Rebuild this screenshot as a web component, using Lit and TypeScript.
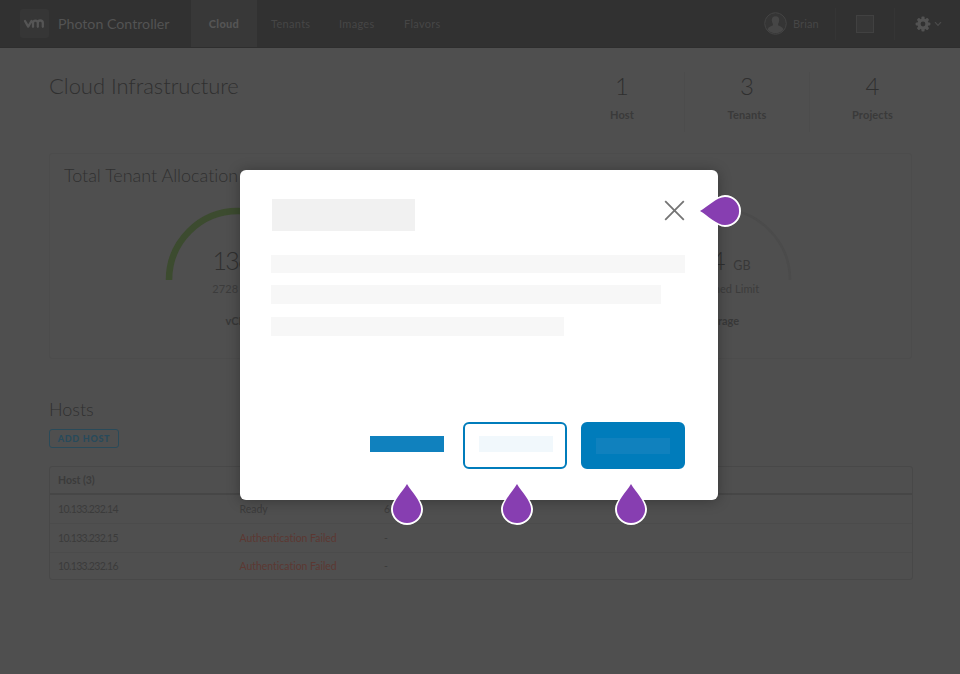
import { LitElement, html, css, svg } from "lit";
import { customElement, property } from "lit/decorators.js";

@customElement("callout-drop")
class CalloutDrop extends LitElement {
  @property({ reflect: true }) point = "up";
  static styles = css`
    :host { display: block; position: absolute; width: 34px; height: 44px; }
    :host([point="left"]) svg { transform: rotate(-90deg); }
    svg { display: block; overflow: visible; }
    .rim { fill: #fff; }
    .core { fill: #873eb1; }
  `;
  render() {
    return html`<svg width="34" height="44" viewBox="0 0 34 44">
      <path class="rim" d="M17 1.6 C13.4 8 1 18.5 1 27 A16 16 0 0 0 33 27 C33 18.5 20.6 8 17 1.6Z"/>
      <path class="core" d="M17 2 C12.6 9.5 2.9 19 2.9 27 A14.1 14.1 0 0 0 31.1 27 C31.1 19 21.4 9.5 17 2Z"/>
    </svg>`;
  }
}

@customElement("app-root")
class AppRoot extends LitElement {
  static styles = css`
    :host {
      display: block; position: relative; width: 960px; height: 674px; overflow: hidden;
      background: #4f4f4f; color: #2f2f2f; font-family: Lato, "Open Sans", sans-serif;
      font-variant-ligatures: none;
    }
    * { box-sizing: border-box; }
    .header { height: 48px; background: #313131; border-bottom: 1px solid #2e2e2e; display: flex; align-items: center; color: #464646; font-size: 11px; }
    .logo { width: 29px; height: 29px; margin-left: 20px; border-radius: 3px; background: #363636; display: block; }
    .logo path { fill: none; stroke: #555; stroke-width: 2.3; stroke-linecap: round; stroke-linejoin: round; }
    .brand { margin-left: 9px; width: 133px; color: #535353; font-size: 14.2px; white-space: nowrap; line-height: 20px; }
    .tab { height: 47px; line-height: 47px; letter-spacing: .3px; white-space: nowrap; }
    .tab.active { width: 66px; text-align: center; background: #383838; color: #555; font-weight: 900; }
    .tab.t1 { margin-left: 14px; width: 68px; }
    .tab.t2 { width: 65px; }
    .user { margin-left: auto; display: flex; align-items: center; gap: 6px; width: 71px; letter-spacing: .1px; }
    .user svg { display: block; }
    .cell { height: 32px; border-left: 1px solid #353535; display: flex; align-items: center; justify-content: center; }
    .box { width: 59px; }
    .square { width: 18px; height: 18px; border: 1px solid #414141; background: #373737; }
    .gear { width: 66px; gap: 3px; padding-left: 1px; }
    .top { display: flex; justify-content: space-between; padding: 24px 25px 0 49px; height: 105px; }
    h1 { margin: 0; font-weight: 300; font-size: 22px; line-height: 28px; white-space: nowrap; letter-spacing: -.05px; }
    .stats { display: flex; }
    .stat { width: 125px; height: 60px; text-align: center; border-right: 1px solid #4c4c4c; }
    .stat:last-child { border: 0; }
    .num { font-size: 24px; font-weight: 300; line-height: 28px; }
    .lab { font-size: 11px; font-weight: 700; color: #3a3a3a; line-height: 14px; margin-top: 8px; letter-spacing: .15px; }
    .card { margin-left: 49px; width: 863px; height: 206px; border: 1px solid #4c4c4c; border-radius: 3px; padding: 9px 14px; }
    h2 { margin: 0; font-weight: 300; font-size: 18px; line-height: 24px; white-space: nowrap; letter-spacing: -.02px; }
    .gauges { display: flex; justify-content: space-between; padding: 19px 105px 0 101px; }
    .gauge { width: 146px; text-align: center; }
    .gauge svg { display: block; height: 74px; overflow: visible; }
    .value { margin: -35px 0 0 -13px; font-size: 25px; font-weight: 300; line-height: 30px; height: 30px; white-space: nowrap; letter-spacing: -1.8px; }
    .value.unit { margin-left: 9px; letter-spacing: 0; }
    .value small { font-size: 12.5px; line-height: 1; font-weight: 400; color: #383838; margin-left: 1px; }
    .limit { font-size: 11px; line-height: 14px; margin: 7px 0 0 2px; color: #3c3c3c; white-space: nowrap; letter-spacing: .1px; }
    .kind { font-size: 11px; line-height: 14px; margin: 18px 0 0 3px; font-weight: 700; color: #383838; }
    .hosts { margin: 38px 0 0 49px; width: 864px; }
    .add { width: 70px; height: 19px; margin-top: 8px; border: 1px solid #2a4a59; border-radius: 3px; color: #284a5b; font-size: 9px; font-weight: 900; line-height: 17px; letter-spacing: .7px; text-align: center; white-space: nowrap; }
    .table { margin-top: 18px; border: 1px solid #484848; border-radius: 3px; height: 114px; font-size: 10.5px; color: #3b3b3b; }
    .row { display: grid; grid-template-columns: 181.5px 144.5px 1fr; padding-left: 8px; height: 29px; line-height: 28px; border-bottom: 1px solid #4b4b4b; letter-spacing: -.03px; }
    .row:last-child { border: 0; line-height: 27px; }
    .row.head { height: 28px; line-height: 27px; border-bottom: 2px solid #464646; font-weight: 700; }
    .ip { letter-spacing: -.65px; }
    .fail { color: #5c3832; }
    .modal { position: absolute; left: 240px; top: 170px; width: 478px; height: 330px; border-radius: 6px; background: #fff; box-shadow: 0 1px 14px rgba(0,0,0,.3); padding: 29px 33px 31px 31px; display: flex; flex-direction: column; }
    .title { display: flex; justify-content: space-between; align-items: flex-start; padding-left: 1px; }
    .title i { width: 143px; height: 32px; background: #f1f1f1; }
    .title svg { display: block; margin-top: 1px; }
    .line { height: 18px; background: #f7f7f7; }
    .l1 { margin-top: 24px; width: 414px; }
    .l2 { margin-top: 12px; width: 390px; height: 19px; }
    .l3 { margin-top: 13px; width: 293px; height: 19px; }
    .actions { margin-top: auto; display: flex; justify-content: flex-end; align-items: flex-start; }
    .flat { width: 74px; height: 16px; background: #1081be; margin: 14px 19px 0 0; }
    .btn { width: 104px; height: 47px; border: 2px solid #007cbb; border-radius: 6px; padding: 12px 0 0 14px; margin-right: 14px; }
    .btn i { display: block; width: 74px; height: 16px; background: #f1f8fc; }
    .btn.solid { background: #007cbb; margin: 0; padding: 14px 0 0 13px; }
    .btn.solid i { background: #1081be; }
    .d1 { left: 703px; top: 189px; }
    .d2 { left: 390px; top: 482px; }
    .d3 { left: 500px; top: 482px; }
    .d4 { left: 614px; top: 482px; }
  `;

  private gauge(kind: string, value: unknown, limit: string, used: boolean) {
    const arc = used
      ? svg`<path d="M4 74 A69 69 0 0 1 142 74" fill="none" stroke="#3c4b2f" stroke-width="6.5"/>`
      : svg`<path d="M2 74 A71 71 0 0 1 144 74" fill="none" stroke="#4b4b4b" stroke-width="2.5"/>`;
    return html`<div class="gauge"><svg width="146" height="74">${arc}</svg>
      <div class=${used ? "value" : "value unit"}>${value}</div><div class="limit">${limit}</div><div class="kind">${kind}</div></div>`;
  }

  render() {
    const rows = [["10.133.232.14", "Ready", "6"], ["10.133.232.15", "Authentication Failed", "-"], ["10.133.232.16", "Authentication Failed", "-"]];
    return html`
      <div class="header">
        <svg class="logo" viewBox="0 0 29 29"><path d="M5 12 L8.2 17.6 L11.5 12 M13 17.8 V14 A2.4 2.4 0 0 1 17.8 14 V17.8 M17.8 14 A2.4 2.4 0 0 1 22.8 14 V17.8"/></svg>
        <div class="brand">Photon Controller</div>
        <div class="tab active">Cloud</div>
        <div class="tab t1">Tenants</div><div class="tab t2">Images</div><div class="tab">Flavors</div>
        <div class="user">
          <svg width="23" height="23" viewBox="0 0 23 23"><circle cx="11.5" cy="11.5" r="10.8" fill="#353535" stroke="#444"/><path d="M11.5 4.2 C8.8 4.2 7.6 6 7.8 8.5 C8 10.8 9 11.5 9 13 C8.4 14.2 4.5 14.3 3.6 17.5 A10 10 0 0 0 19.4 17.5 C18.5 14.3 14.6 14.2 14 13 C14 11.5 15 10.8 15.2 8.5 C15.4 6 14.2 4.2 11.5 4.2Z" fill="#464646"/></svg>
          Brian
        </div>
        <div class="cell box"><div class="square"></div></div>
        <div class="cell gear">
          <svg width="16" height="16" viewBox="-8 -8 16 16"><g fill="#525252">${[0, 45, 90, 135].map((a) => svg`<rect x="-1.6" y="-7.4" width="3.2" height="14.8" rx="1" transform="rotate(${a})"/>`)}<circle r="5.6"/></g><circle r="2.4" fill="#313131"/></svg>
          <svg width="8" height="6" viewBox="0 0 8 6"><path d="M1 1.2 L4 4.3 L7 1.2" fill="none" stroke="#4b4b4b" stroke-width="1.2"/></svg>
        </div>
      </div>
      <div class="top">
        <h1>Cloud Infrastructure</h1>
        <div class="stats">${[["1", "Host"], ["3", "Tenants"], ["4", "Projects"]].map(([n, l]) => html`<div class="stat"><div class="num">${n}</div><div class="lab">${l}</div></div>`)}</div>
      </div>
      <div class="card">
        <h2>Total Tenant Allocation</h2>
        <div class="gauges">
          ${this.gauge("vCPU", "136", "2728 Limit", true)}
          ${this.gauge("Storage", html`64 <small>GB</small>`, "Undefined Limit", false)}
        </div>
      </div>
      <div class="hosts">
        <h2>Hosts</h2>
        <div class="add">ADD HOST</div>
        <div class="table">
          <div class="row head"><span>Host (3)</span></div>
          ${rows.map(([h, s, v]) => html`<div class="row"><span class="ip">${h}</span><span class=${s === "Ready" ? "" : "fail"}>${s}</span><span>${v}</span></div>`)}
        </div>
      </div>
      <div class="modal">
        <div class="title"><i></i><svg width="21" height="21" viewBox="0 0 21 21"><path d="M1.2 1.2 L19.8 19.8 M19.8 1.2 L1.2 19.8" stroke="#747474" stroke-width="1.8"/></svg></div>
        <div class="line l1"></div><div class="line l2"></div><div class="line l3"></div>
        <div class="actions"><div class="flat"></div><div class="btn"><i></i></div><div class="btn solid"><i></i></div></div>
      </div>
      <callout-drop class="d1" point="left"></callout-drop>
      <callout-drop class="d2"></callout-drop>
      <callout-drop class="d3"></callout-drop>
      <callout-drop class="d4"></callout-drop>
    `;
  }
}
